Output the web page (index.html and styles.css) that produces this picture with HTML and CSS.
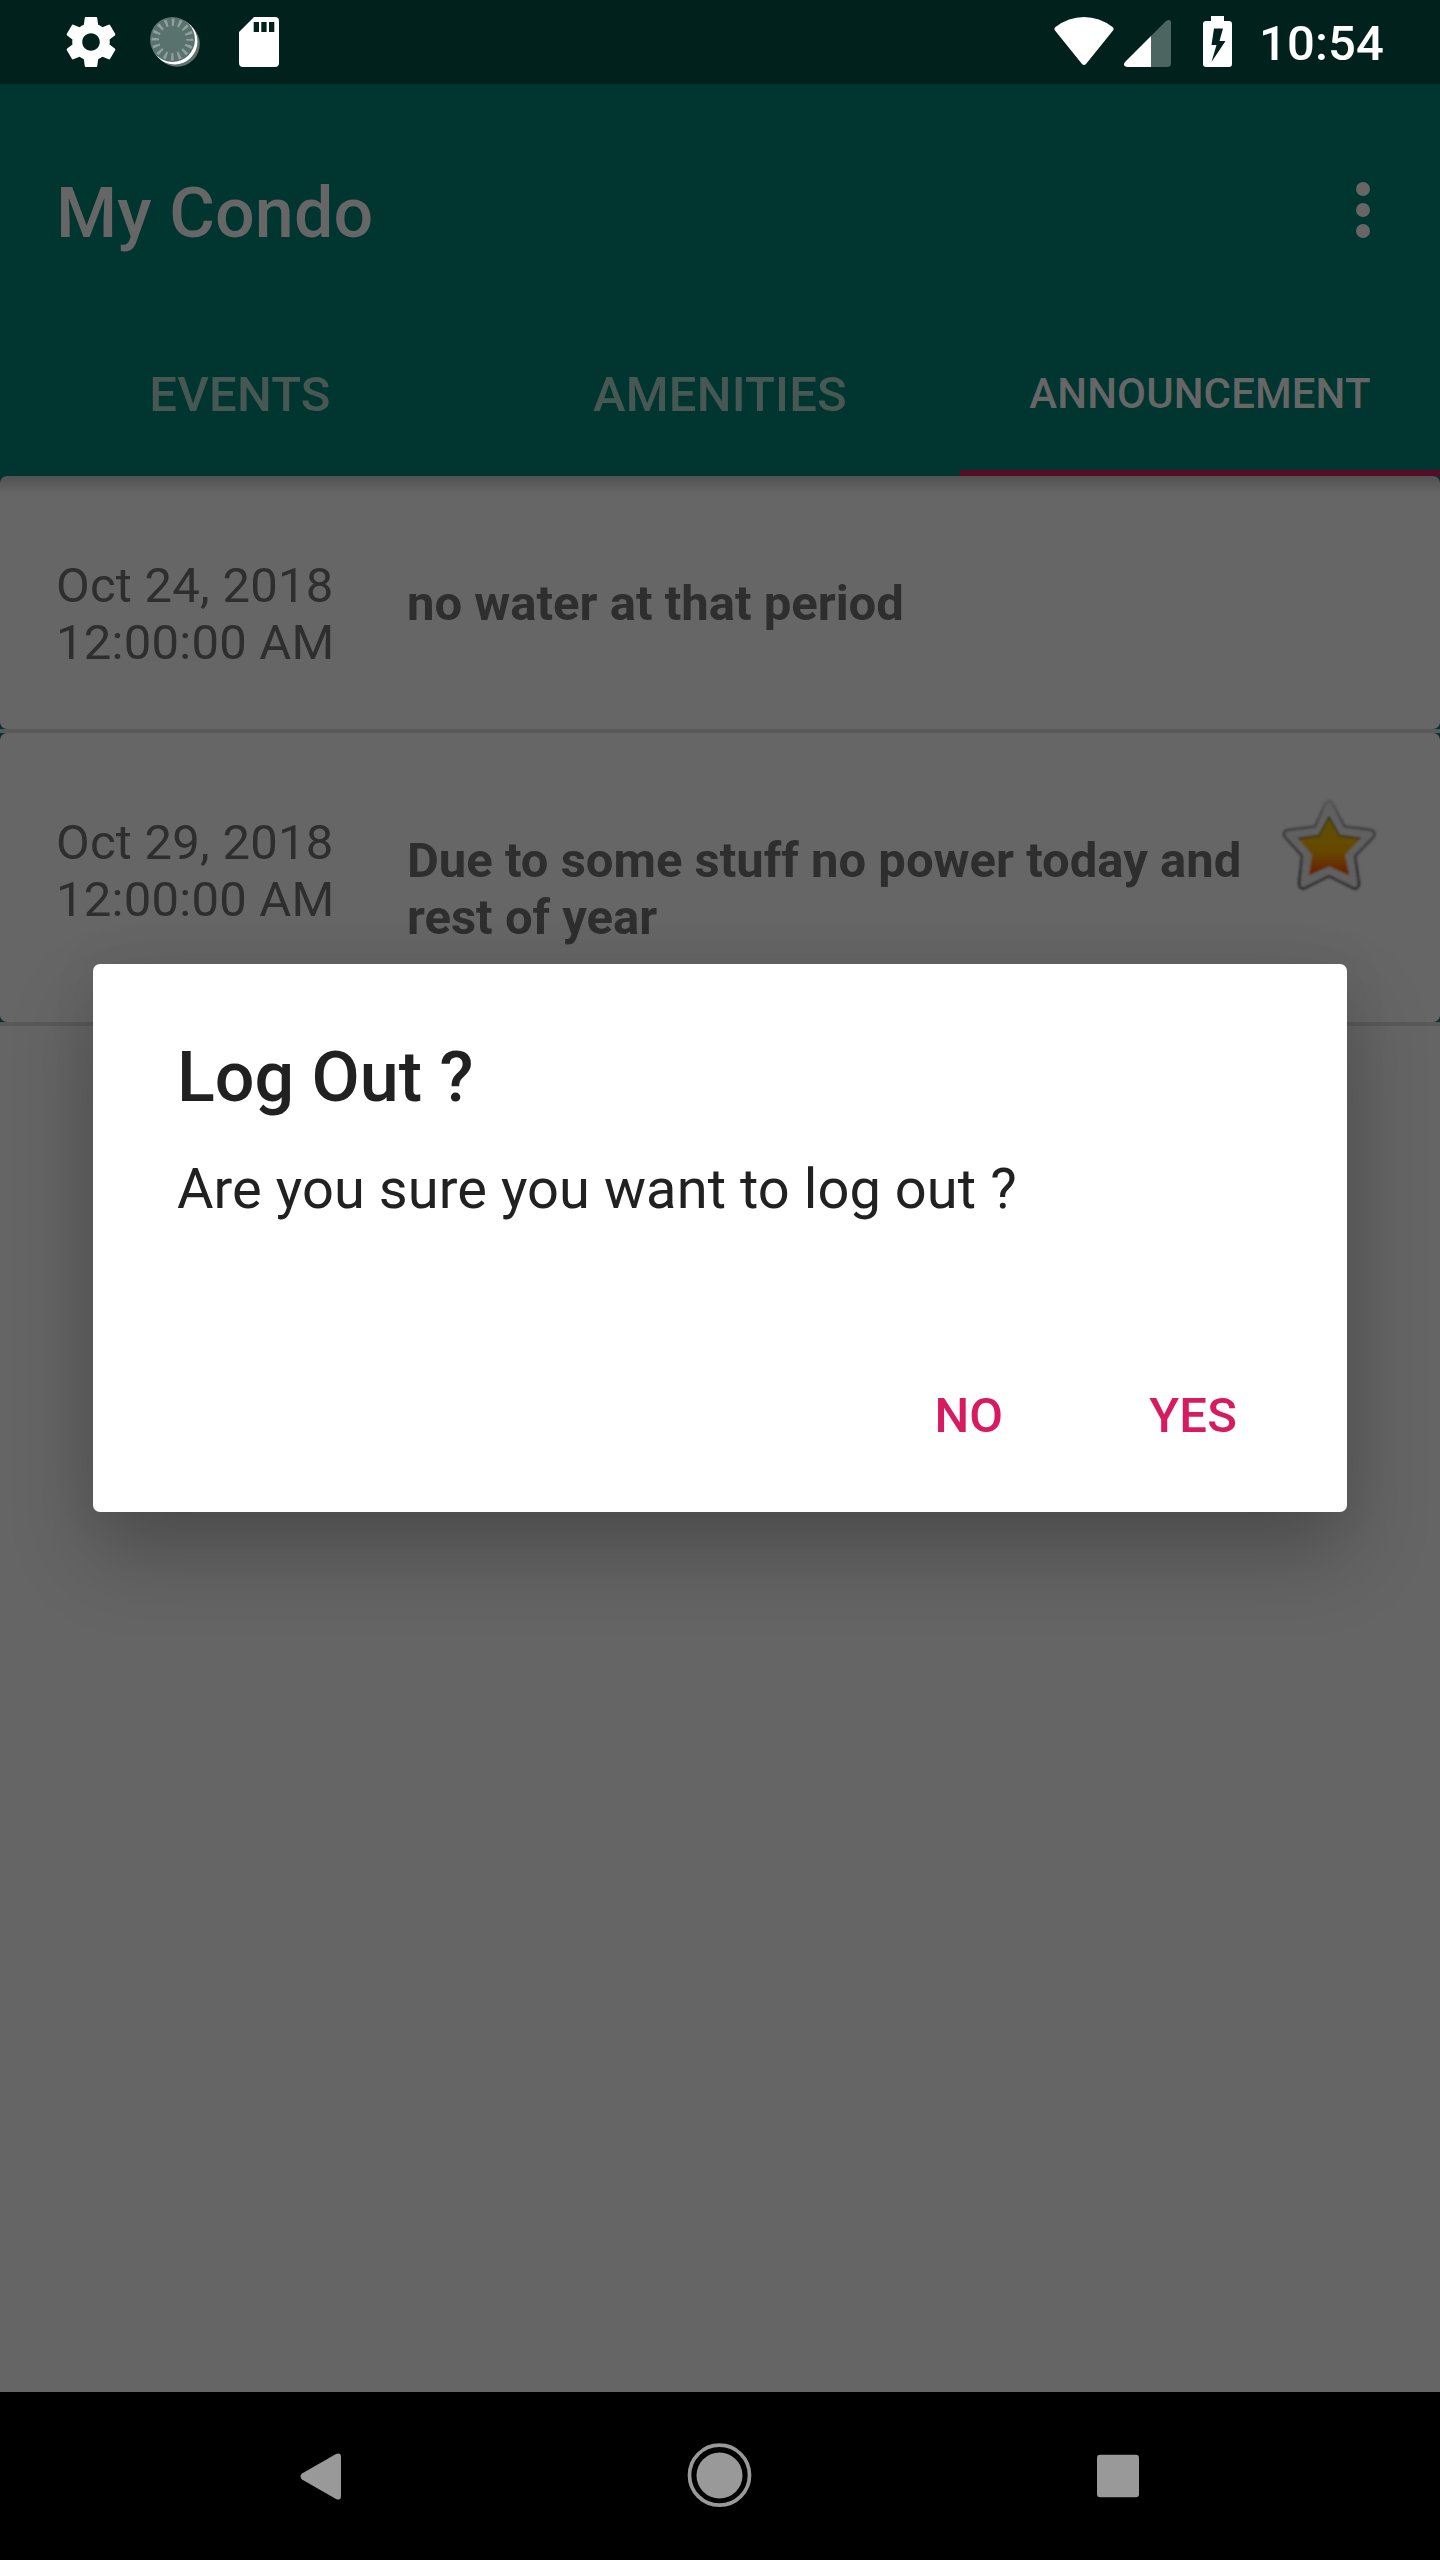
FILE: index.html
```html
<!DOCTYPE html>
<html lang="en">
<head>
<meta charset="utf-8">
<title>My Condo</title>
<link rel="stylesheet" href="styles.css">
</head>
<body>
<div class="screen">
  <header class="status">
    <svg class="status-left" width="280" height="84" viewBox="40 0 280 84">
      <g fill="#fff">
        <path transform="translate(61 12) scale(2.5)" d="M19.430 12.980c.04-.32.07-.64.07-.98s-.03-.66-.07-.98l2.110-1.650c.19-.15.24-.42.12-.64l-2-3.460c-.12-.22-.39-.3-.61-.22l-2.490 1c-.52-.4-1.080-.73-1.690-.98l-.38-2.650C14.460 2.180 14.250 2 14 2h-4c-.25 0-.46.18-.49.42l-.38 2.650c-.61.25-1.170.59-1.690.98l-2.490-1c-.23-.09-.49 0-.61.22l-2 3.460c-.13.22-.07.49.12.64l2.110 1.650c-.04.32-.07.65-.07.98s.03.66.07.98l-2.110 1.650c-.19.15-.24.42-.12.64l2 3.460c.12.22.39.3.61.22l2.490-1c.52.4 1.080.73 1.690.98l.38 2.650c.03.24.24.42.49.42h4c.25 0 .46-.18.49-.42l.38-2.650c.61-.25 1.170-.59 1.690-.98l2.490 1c.23.09.49 0 .61-.22l2-3.460c.12-.22.07-.49-.12-.64l-2.110-1.650zM12 15.500c-1.930 0-3.500-1.570-3.500-3.500s1.570-3.500 3.500-3.500 3.500 1.570 3.500 3.500-1.570 3.500-3.500 3.500z"/>
        <circle cx="177" cy="44" r="22.800" fill="#5b726d"/>
        <circle cx="174.500" cy="41.500" r="23"/>
        <circle cx="172.500" cy="39.500" r="22.500" fill="#59726d"/>
        <circle cx="172.500" cy="39.500" r="17.200" fill="none" stroke="#8fa09c" stroke-width="7.500" stroke-dasharray="2.500 4.255" stroke-dashoffset="1.250"/>
        <path fill-rule="evenodd" d="M254 17h21a4 4 0 0 1 4 4v42a4 4 0 0 1-4 4h-32a4 4 0 0 1-4-4V32zM253.700 22v10h5.300v-10zM261.300 22v10h5.300v-10zM269 22v10h5.300v-10z"/>
      </g>
    </svg>
    <svg class="status-right" width="220" height="84" viewBox="1030 0 220 84">
      <path fill="#fff" d="M1055 30.500q-1.500-2 .5-3.500 13-10 28.500-10t28.500 10q2 1.500.5 3.500l-27 33.500q-2 2-4 0z"/>
      <path fill="#4d6561" d="M1151 36l15-15q5-3 5 2v40q0 4-4 4h-16z"/>
      <path fill="#fff" d="M1151 36v31h-24q-5-1-2-5z"/>
      <path fill="#fff" fill-rule="evenodd" d="M1211 16h13v5h5q3 0 3 3v40q0 3-3 3h-23q-3 0-3-3V24q0-3 3-3h5zM1214 28.500l-2.500 16.500h5l-5 17 14-21h-6l3.500-12.500z"/>
    </svg>
    <time class="clock">10:54</time>
  </header>
  <section class="appbar">
    <div class="toolbar">
      <h1 class="title">My Condo</h1>
      <div class="menu"><i class="dot"></i><i class="dot"></i><i class="dot"></i></div>
    </div>
    <nav class="tabs">
      <span class="tab">EVENTS</span>
      <span class="tab">AMENITIES</span>
      <span class="tab active">ANNOUNCEMENT</span>
    </nav>
  </section>
  <main class="content">
    <div class="list">
      <article class="card first">
        <p class="date">Oct 24, 2018<br>12:00:00 AM</p>
        <p class="message">no water at that period</p>
      </article>
      <hr class="divider">
      <article class="card second">
        <p class="date">Oct 29, 2018<br>12:00:00 AM</p>
        <p class="message">Due to some stuff no power today and rest of year</p>
        <svg class="star" width="96" height="96" viewBox="1281 798 96 96">
          <defs>
            <linearGradient id="gold" x1="0" y1="0" x2="0" y2="1"><stop offset="0" stop-color="#5f5000"/><stop offset=".55" stop-color="#664a00"/><stop offset=".75" stop-color="#663800"/><stop offset="1" stop-color="#661c00"/></linearGradient>
            <linearGradient id="rim" x1="0" y1="0" x2="0" y2="1"><stop offset="0" stop-color="#555"/><stop offset=".35" stop-color="#3a3a3a"/><stop offset="1" stop-color="#262626"/></linearGradient>
            <filter id="soft"><feGaussianBlur stdDeviation=".8"/></filter>
          </defs>
          <g filter="url(#soft)" stroke-linejoin="round">
            <path d="M1325.500 803q3.500-4 7 0l12 23.500 27 3.500q5 2 2 7l-18.500 19 4 28q-1 6-6 4l-24-12-24 12q-5 2-6-4l3-28-17-19q-3-5 2-7l28-3.500z" fill="#606060" stroke="url(#rim)" stroke-width="2.500"/>
            <path d="M1329 817l10.500 18.500 21.500 3-16 16.500 4.500 20.500-20.500-9-20 9 3-20.500-14-16.500 20.500-3z" fill="url(#gold)"/>
            <path d="M1298 838.500l21-3 10-18.500 10.500 18.500 21.500 3" fill="none" stroke="#322a00" stroke-width="1.500"/>
          </g>
        </svg>
      </article>
      <hr class="divider">
    </div>
  </main>
  <footer class="navbar">
    <svg width="900" height="168" viewBox="270 2392 900 168" fill="#999">
      <path d="M302 2473.500L336 2454q5-2 5 3v39q0 5-5 3L302 2479.500q-3-3 0-6z"/>
      <circle cx="719.500" cy="2475.200" r="30" fill="none" stroke="#999" stroke-width="3.700"/>
      <circle cx="719.500" cy="2475.500" r="23"/>
      <rect x="1097" y="2454.700" width="42" height="42.500" rx="3"/>
    </svg>
  </footer>
  <div class="dialog">
    <h2 class="dialog-title">Log Out ?</h2>
    <p class="dialog-text">Are you sure you want to log out ?</p>
    <div class="actions"><span class="action">NO</span><span class="action">YES</span></div>
  </div>
</div>
</body>
</html>
```
FILE: styles.css
```css
* { box-sizing: border-box; margin: 0; padding: 0; }
body { font-family: Roboto, sans-serif; background: #666; }
.screen { position: relative; width: 1440px; height: 2560px; display: flex; flex-direction: column; overflow: hidden; }
.status { height: 84px; background: #00211c; display: flex; align-items: center; padding: 0 56px 0 40px; }
.status svg { flex: none; }
.status-right { margin-left: auto; }
.clock { font-size: 49px; font-weight: 500; line-height: 84px; color: #fff; width: 134px; text-align: right; padding-top: 3px; white-space: nowrap; letter-spacing: .15px; }
.appbar { height: 392px; background: #003530; padding-top: 28px; }
.toolbar { height: 196px; display: flex; align-items: center; justify-content: space-between; padding: 5px 70px 0 56px; }
.title { font-size: 70px; font-weight: 500; color: #666; letter-spacing: .1px; }
.menu { display: flex; flex-direction: column; gap: 7px; padding-bottom: 5px; }
.dot { width: 14px; height: 14px; border-radius: 50%; background: #666; }
.tabs { height: 168px; display: grid; grid-template-columns: repeat(3, 1fr); }
.tab { display: flex; align-items: center; justify-content: center; font-size: 49px; font-weight: 500; color: #475854; padding-top: 4px; letter-spacing: .2px; }
.tab.active { font-size: 42px; color: #666; border-bottom: 6px solid #560b26; padding-top: 9px; letter-spacing: .1px; }
.content { flex: 1; background: #656565; }
.list { background: #003530; }
.card { display: flex; align-items: flex-start; background: #666; border-radius: 7px; color: #2e2e2e; font-size: 49px; line-height: 57px; padding: 81px 0 0 56px; }
.card.first { height: 253px; background: linear-gradient(#525252, #666 18px); }
.card.second { height: 289px; }
.divider { height: 4px; border: 0; background: #595959; }
.date { width: 351px; letter-spacing: .25px; }
.message { width: 870px; font-weight: 700; padding-top: 18px; }
.star { flex: none; margin-top: -16px; margin-left: 4px; }
.navbar { height: 168px; background: #000; display: flex; justify-content: center; }
.dialog { position: absolute; left: 93px; top: 964px; width: 1254px; height: 548px; border-radius: 7px; background: #fff; color: #212121; padding: 72px 84px 0; box-shadow: 0 42px 84px rgba(0,0,0,.24), 0 0 50px rgba(0,0,0,.06); display: flex; flex-direction: column; }
.dialog-title { font-size: 70px; line-height: 82px; font-weight: 500; }
.dialog-text { font-size: 56px; line-height: 66px; margin-top: 38px; letter-spacing: .06px; }
.actions { display: flex; justify-content: flex-end; gap: 146px; margin-top: 165px; padding-right: 26px; }
.action { font-size: 49px; line-height: 57px; font-weight: 500; color: #d81b60; letter-spacing: .15px; }
```
